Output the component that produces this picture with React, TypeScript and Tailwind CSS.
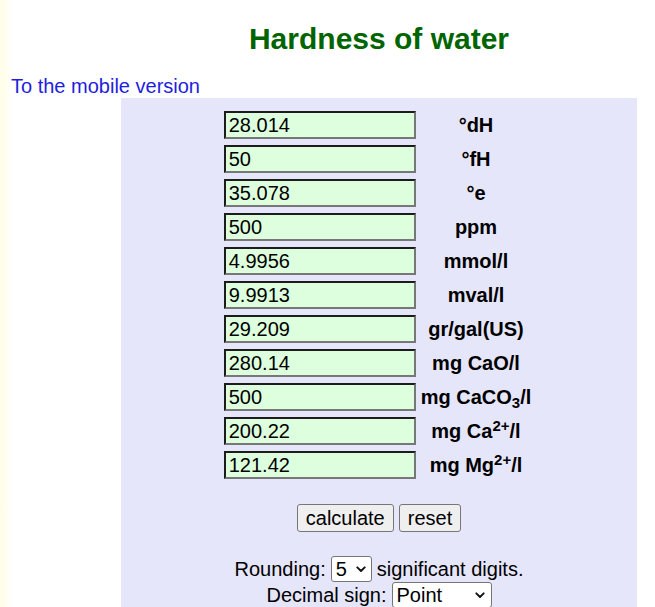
import React from "react";

function Chevron() {
  return (
    <svg width="10" height="7" viewBox="0 0 10 7" className="shrink-0">
      <path d="M1.3 1.3 L5 5 L8.7 1.3" fill="none" stroke="#111" strokeWidth="1.9" strokeLinecap="round" strokeLinejoin="round" />
    </svg>
  );
}

const rows: { value: string; label: React.ReactNode }[] = [
  { value: "28.014", label: <>°dH</> },
  { value: "50", label: <>°fH</> },
  { value: "35.078", label: <>°e</> },
  { value: "500", label: <>ppm</> },
  { value: "4.9956", label: <>mmol/l</> },
  { value: "9.9913", label: <>mval/l</> },
  { value: "29.209", label: <>gr/gal(US)</> },
  { value: "280.14", label: <>mg CaO/l</> },
  {
    value: "500",
    label: (
      <>
        mg CaCO<sub>3</sub>/l
      </>
    ),
  },
  {
    value: "200.22",
    label: (
      <>
        mg Ca<sup>2+</sup>/l
      </>
    ),
  },
  {
    value: "121.42",
    label: (
      <>
        mg Mg<sup>2+</sup>/l
      </>
    ),
  },
];

export default function App() {
  return (
    <div className="min-h-screen font-['Liberation_Sans',Arial,sans-serif] text-black bg-[linear-gradient(to_right,#fffee6,#ffffff_14px)]">
      <h1 className="ml-[121px] w-[516px] pt-[22px] text-center text-[30px] leading-[34px] font-bold text-[#006400]">
        Hardness of water
      </h1>
      <div className="pt-[19px] pl-[11px] text-[20px] leading-[23px]">
        <a className="text-[#1e1ee0]">To the mobile version</a>
      </div>
      <div className="ml-[121px] w-[516px] bg-[#e6e6fa] pt-[13px] pb-[20px]">
        <div className="grid grid-cols-[192px_auto] gap-y-[6px] gap-x-[2px] w-fit mx-auto">
          {rows.map((r, i) => (
            <React.Fragment key={i}>
              <div className="h-[28px] border-2 border-t-[#1c1c1c] border-l-[#1c1c1c] border-r-[#777777] border-b-[#777777] bg-[#ddffdd] px-[3px] text-[20px] leading-[24px] flex items-center">
                {r.value}
              </div>
              <div className="h-[28px] px-[3px] flex items-center justify-center text-[20px] font-bold whitespace-nowrap">
                <span className="leading-[24px]">{r.label}</span>
              </div>
            </React.Fragment>
          ))}
        </div>
        <div className="mt-[25px] flex justify-center gap-[5px]">
          <div className="h-[28px] px-[8px] border border-[#767676] rounded-[3px] bg-[#efefef] text-[20px] leading-[26px]">
            calculate
          </div>
          <div className="h-[28px] px-[8px] border border-[#767676] rounded-[3px] bg-[#efefef] text-[20px] leading-[26px]">
            reset
          </div>
        </div>
        <div className="mt-[24px] flex justify-center items-center gap-[5px] h-[26px] text-[20px] leading-[24px]">
          <span>Rounding:</span>
          <div className="w-[41px] h-[26px] border border-[#767676] rounded-[3px] bg-white flex items-center justify-between pl-[4px] pr-[5px]">
            <span>5</span>
            <Chevron />
          </div>
          <span>significant digits.</span>
        </div>
        <div className="flex justify-center items-center gap-[5px] h-[26px] text-[20px] leading-[24px]">
          <span>Decimal sign:</span>
          <div className="w-[100px] h-[26px] border border-[#767676] rounded-[3px] bg-white flex items-center justify-between pl-[4px] pr-[6px]">
            <span>Point</span>
            <Chevron />
          </div>
        </div>
      </div>
    </div>
  );
}
